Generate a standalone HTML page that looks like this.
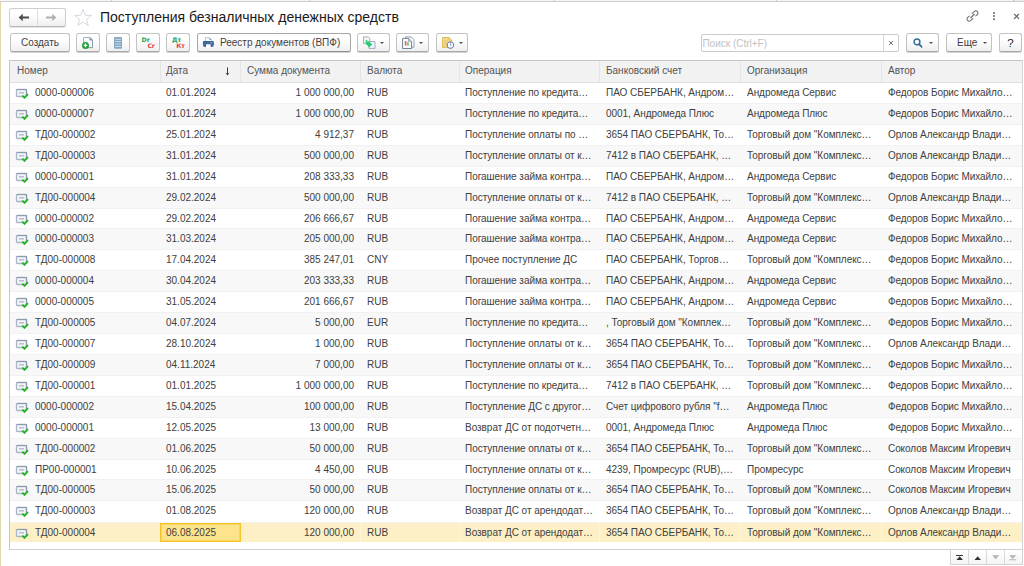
<!DOCTYPE html>
<html lang="ru">
<head>
<meta charset="utf-8">
<title>Поступления безналичных денежных средств</title>
<style>
*{box-sizing:border-box;margin:0;padding:0}
html,body{width:1024px;height:566px;overflow:hidden;background:#fff}
body{font-family:"Liberation Sans",Arial,sans-serif;font-size:10px;color:#404040;position:relative}
.abs{position:absolute}
#topline{left:0;top:0;width:1024px;height:2px;background:#f4f4f4;border-bottom:1px solid #cfcfcf}
#leftline{left:0;top:2px;width:1px;height:564px;background:#e2daae}
#corner{left:1013px;top:0;width:11px;height:2px;background:#ececec;border-left:1px solid #bdbdbd;border-bottom:1px solid #cfcfcf}
.tick{top:0;width:1px;height:2px;background:#cdcdcd}
.btn{position:absolute;height:19px;border:1px solid #c3c3c3;border-bottom-color:#a9a9a9;border-radius:2.5px;background:linear-gradient(#fff 30%,#efefef);box-shadow:0 1px 0 rgba(0,0,0,.18);color:#3f3f3f;font-size:10px;line-height:17px;text-align:center;white-space:nowrap}
.btn svg{position:absolute}
.btn.dark{border-color:#a6a6a6;border-bottom-color:#8f8f8f}
.mini{position:absolute;font-family:"DejaVu Sans","Liberation Sans",sans-serif;font-size:6.2px;font-weight:bold;line-height:7px;letter-spacing:-0.1px}
.tri{position:absolute;top:8px;width:0;height:0;border-left:2.5px solid transparent;border-right:2.5px solid transparent;border-top:2.5px solid #505050}
#title{left:100px;top:8px;font-size:14px;line-height:18px;color:#1a1a1a;white-space:nowrap}
#search{left:701px;top:34px;width:198px;height:18px;border:1px solid #cbcbcb;border-radius:2px;background:#fff}
#search .ph{position:absolute;left:0.4px;top:1px;line-height:16px;color:#c2c2c2;font-size:10px}
#search .x{position:absolute;right:0;top:0;width:15px;height:16px;border-left:1px solid #d6d6d6}
#grid{left:9px;top:60px;width:1014px;height:490px;border:1px solid #c6c6c6;border-right-color:#d6d6d6;border-bottom-color:#d0d0d0;background:#fff;overflow:hidden}
.h{position:absolute;left:0;top:0;width:1012px;height:22px;background:#f2f2f2;border-bottom:1px solid #e0e0e0}
.r{position:absolute;left:0;width:1012px;white-space:nowrap;border-bottom:1px solid #f1f1f1}
.c{position:absolute;top:0;height:20px;line-height:19px;overflow:hidden;white-space:nowrap;padding-left:6px}
.h .c{height:21px;line-height:19px;border-left:1px solid #e5e5e5;color:#525252;padding-left:5px}
.h .c0{border-left:none;padding-left:7px}
.h .c3,.h .c5,.h .c6,.h .c7{padding-left:6px}
.r.alt{background:#f8f8f8}
.r.sel{background:#fdf0c6;border-bottom:none}
.r.sel .c{height:19px}
.r.sel .c{border-left:1px solid #fdf6dd;padding-left:5px}
.r.sel .c0{border-left:none}
.c0{left:0;width:150px}
.c1{left:150px;width:80px}
.c2{left:230px;width:120px;text-align:right;padding-right:6px;padding-left:0}
.h .c2{text-align:left;padding-left:6px}
.c3{left:350px;width:99px;padding-left:7px}
.c4{left:449px;width:140px}
.c5{left:589px;width:141px;padding-left:7px}
.c6{left:730px;width:141px;padding-left:7px}
.c7{left:871px;width:141px;padding-left:7px}
.r.sel .c3,.r.sel .c5,.r.sel .c6,.r.sel .c7{padding-left:6px}
.r .c0,.r.sel .c0{padding-left:25px}
.r .c4,.r .c5,.r .c6{letter-spacing:-0.04px}
.r .c7{letter-spacing:-0.08px}
.di{position:absolute;left:5px;top:4px}
.r.sel .c1{background:#fde48c;border:1px solid #f5c32c;box-shadow:inset 0 0 0 1px rgba(246,200,60,.55);line-height:17px;height:19px;padding-left:5px;width:81px;z-index:2}
.r.sel .c2{padding-left:0}
.sort{position:absolute;left:215px;top:6px}
#pager{left:950px;top:550px;width:73px;height:15px;border:1px solid #d4d4d4;border-top:none;background:linear-gradient(#fff,#f4f4f4)}
#pager i{position:absolute;top:0;width:1px;height:14px;background:#d8d8d8}
#pager svg{position:absolute;top:4px}
</style>
</head>
<body>
<div class="abs" id="topline"></div>
<div class="abs" id="leftline"></div>
<div class="abs" id="corner"></div>
<div class="abs tick" style="left:111px"></div><div class="abs tick" style="left:309px"></div><div class="abs tick" style="left:554px"></div><div class="abs tick" style="left:776px"></div>

<!-- nav buttons -->
<div class="btn" style="left:9px;top:8px;width:57px;height:19px;border-color:#cecece;border-bottom-color:#b8b8b8;box-shadow:0 1px 0 rgba(0,0,0,.1)">
  <div class="abs" style="left:27px;top:0;width:1px;height:17px;background:#dedede"></div>
  <svg style="left:8px;top:4px" width="12" height="9" viewBox="0 0 12 9"><path d="M0.6 4.5 L4.8 0.8 V3.4 H11 V5.6 H4.8 V8.2 Z" fill="#4d4d4d"/></svg>
  <svg style="left:35px;top:4px" width="12" height="9" viewBox="0 0 12 9"><path d="M11.4 4.5 L7.2 0.8 V3.4 H1 V5.6 H7.2 V8.2 Z" fill="#b1b1b1"/></svg>
</div>
<svg class="abs" style="left:73px;top:8px" width="20" height="19" viewBox="0 0 20 19"><path d="M10 1.3 L12.2 7.2 L18.4 7.5 L13.5 11.4 L15.2 17.4 L10 14 L4.8 17.4 L6.5 11.4 L1.6 7.5 L7.8 7.2 Z" fill="#fff" stroke="#cdd4de" stroke-width="0.9" stroke-linejoin="round"/></svg>
<div class="abs" id="title">Поступления безналичных денежных средств</div>

<!-- title right icons -->
<svg class="abs" style="left:965px;top:9px" width="15" height="15" viewBox="0 0 15 15"><g transform="translate(7.5 7) rotate(-42)" fill="none" stroke="#6c6c6c" stroke-width="1.05" stroke-linecap="round"><path d="M1.3 -2.1 H4.5 A2.1 2.1 0 0 1 4.5 2.1 H2.6"/><path d="M-1.3 2.1 H-4.5 A2.1 2.1 0 0 1 -4.5 -2.1 H-2.6"/><path d="M-2.6 0 H2.6"/></g></svg>
<div class="abs" style="left:993.2px;top:11.6px;width:2.2px;height:2.2px;border-radius:1px;background:#636363;box-shadow:0 3.1px 0 #636363,0 6.2px 0 #636363"></div>
<svg class="abs" style="left:1013px;top:13px" width="7" height="7" viewBox="0 0 7 7"><path d="M1.1 0.9 L6 5.8 M6 0.9 L1.1 5.8" stroke="#606060" stroke-width="1.15" fill="none"/></svg>

<!-- toolbar -->
<div class="btn" style="left:10px;top:33px;width:60px">Создать</div>

<div class="btn" style="left:76px;top:33px;width:24px">
  <svg style="left:5px;top:3px" width="13" height="13" viewBox="0 0 13 13"><path d="M1.6 0.5 H8 L10.5 3 V10.6 H1.6 Z" fill="#fff" stroke="#a3b0c4" stroke-width="1"/><path d="M10.5 3 V10.6 H5" fill="none" stroke="#8e9cb3" stroke-width="1"/><path d="M7.8 0.6 V3.2 H10.4 Z" fill="#7f8fa8" stroke="#7f8fa8" stroke-width="0.5"/><circle cx="3.5" cy="8.4" r="3.5" fill="#219f38"/><path d="M3.5 6.6 V10.2 M1.7 8.4 H5.3" stroke="#fff" stroke-width="1.2"/></svg>
</div>
<div class="btn" style="left:106px;top:33px;width:24px">
  <svg style="left:6px;top:2px" width="11" height="14" viewBox="0 0 11 14"><rect x="1" y="1" width="8" height="11.8" rx="1.3" fill="#86a5c2"/><path d="M2 3.25 H8 M2 5.65 H8 M2 8.1 H8 M2 10.5 H8" stroke="#d3e3f0" stroke-width="0.9"/></svg>
</div>
<div class="btn" style="left:136px;top:33px;width:24px">
  <span class="mini" style="left:4.6px;top:2.2px;color:#1f9e50">Dr</span><span class="mini" style="left:10.4px;top:8.3px;color:#e04450">Cr</span>
</div>
<div class="btn" style="left:166px;top:33px;width:24px">
  <span class="mini" style="left:5px;top:2.2px;color:#1f9e50">Дт</span><span class="mini" style="left:9.2px;top:8.3px;color:#e04450">Кт</span>
</div>
<div class="btn dark" style="left:197px;top:33px;width:154px;text-align:left;padding-left:22px">
  <svg style="left:4px;top:3px" width="13" height="12" viewBox="0 0 13 12"><path d="M3.4 4.2 V0.7 H7.4 L9.6 2.9 V4.2" fill="#fff" stroke="#a9b8cc" stroke-width="0.9"/><path d="M7.3 0.8 L9.5 3 H7.3 Z" fill="#8ea0b8"/><path d="M0.9 5 Q0.9 3.9 2 3.9 H10.8 Q11.9 3.9 11.9 5 V8 Q11.9 10 9.6 10 H3.2 Q0.9 10 0.9 8 Z" fill="#3d6c9c"/><path d="M1.2 4.6 Q1.4 4 2.2 4 H10.6 Q11.4 4 11.6 4.6 Z" fill="#2f5f90"/><path d="M4.1 7.3 H8.7 V10.4 H4.1 Z" fill="#fff"/><rect x="8.4" y="5.3" width="2" height="0.8" fill="#9db9d6"/></svg>
  Реестр документов (ВПФ)</div>
<div class="btn" style="left:357px;top:33px;width:33px">
  <svg style="left:5px;top:2px" width="14" height="15" viewBox="0 0 14 15"><path d="M0.5 0.9 H5.2 L6.8 2.4 V7.6 H0.5 Z" fill="#f4f6fa" stroke="#97a4ba" stroke-width="0.9"/><path d="M5.8 5.6 H12 V12.4 H5.8 Z" fill="#f4f6fa" stroke="#97a4ba" stroke-width="0.9"/><path d="M2.5 4.2 H4.5 V6.4 L5.5 5.3 L9.3 8.5 L6 11.6 L5.2 9.8 Q2.8 9.3 2.5 4.2 Z" fill="#1fcc70"/></svg>
  <i class="tri" style="left:22px"></i>
</div>
<div class="btn" style="left:396px;top:33px;width:33px">
  <svg style="left:4px;top:2px" width="15" height="15" viewBox="0 0 15 15"><path d="M4.6 0.9 H10 L13 3.6 V11.2 H4.6 Z" fill="#fff" stroke="#8495a8" stroke-width="0.9"/><path d="M1.6 2.4 H7.6 L10.6 5.2 V12.5 H1.6 Z" fill="#fff" stroke="#6f8296" stroke-width="1"/><path d="M7.6 2.6 V5.2 H10.4" fill="#dfe5ec" stroke="#6f8296" stroke-width="0.8"/><rect x="3.9" y="5" width="1.6" height="4.3" fill="#ef6359"/><rect x="6.1" y="6" width="1.7" height="3.3" fill="#79c66e"/><rect x="3" y="9.4" width="6" height="0.6" fill="#b9c0c8"/><rect x="3" y="4.6" width="0.6" height="5" fill="#d5dade"/></svg>
  <i class="tri" style="left:22px"></i>
</div>
<div class="btn" style="left:436px;top:33px;width:32px">
  <svg style="left:4px;top:2px" width="15" height="15" viewBox="0 0 15 15"><path d="M1.5 1.5 H8 L10.7 4 V11.4 H1.5 Z" fill="#f1da8c" stroke="#dfbb52" stroke-width="1"/><path d="M8 1.6 V4 H10.6" fill="#f7e7ae" stroke="#dfbb52" stroke-width="0.8"/><path d="M3.2 5.2 H6.6 M3.2 7.2 H5.4 M3.2 9.2 H5" stroke="#dcbb5a" stroke-width="0.8"/><circle cx="9.4" cy="9.1" r="3.3" fill="#fff" stroke="#4f88cb" stroke-width="1"/><path d="M9.4 5.6 V6.6 M9.4 11.6 V12.6 M5.9 9.1 H6.9 M11.9 9.1 H12.9" stroke="#e8505a" stroke-width="0.9"/><path d="M9.5 7.4 V9.2 H10.6" stroke="#5b86c4" stroke-width="0.8" fill="none"/></svg>
  <i class="tri" style="left:21.5px"></i>
</div>

<div class="abs" id="search"><span class="ph">Поиск (Ctrl+F)</span><span class="x"><svg width="6" height="6" viewBox="0 0 6 6" style="position:absolute;left:4.3px;top:5.3px"><path d="M0.9 0.9 L5.1 5.1 M5.1 0.9 L0.9 5.1" stroke="#555" stroke-width="0.85"/></svg></span></div>
<div class="btn" style="left:906px;top:33px;width:33px">
  <svg style="left:6px;top:4px" width="11" height="11" viewBox="0 0 11 11"><circle cx="4" cy="3.9" r="2.9" fill="none" stroke="#2e6c96" stroke-width="1.45"/><path d="M6.1 6.1 L8.7 8.9" stroke="#2e6c96" stroke-width="1.6" stroke-linecap="round"/></svg>
  <i class="tri" style="left:22px"></i>
</div>
<div class="btn" style="left:946px;top:33px;width:46px;text-align:left;padding-left:10px">Еще<i class="tri" style="left:36px"></i></div>
<div class="btn" style="left:999px;top:33px;width:23px;font-size:11.5px;line-height:19px;color:#222">?</div>

<!-- grid -->
<div class="abs" id="grid">
<div class="h">
<div class="c c0">Номер</div><div class="c c1">Дата</div><div class="c c2">Сумма документа</div><div class="c c3">Валюта</div><div class="c c4">Операция</div><div class="c c5">Банковский счет</div><div class="c c6">Организация</div><div class="c c7">Автор</div>
</div>
<svg class="sort" width="5" height="9" viewBox="0 0 5 9"><path d="M2.5 0.4 V7.6" fill="none" stroke="#3c3c3c" stroke-width="1"/><path d="M0.5 5.8 L2.5 8.4 L4.5 5.8 L2.5 6.6 Z" fill="#3c3c3c"/></svg>
<div id="rows" class="abs" style="left:0;top:22px;width:1011px">
<div class="r" style="top:0px;height:21px"><div class="c c0"><svg class="di" width="14" height="12" viewBox="0 0 14 12"><rect x="1.5" y="2.5" width="10" height="7" rx="0.8" fill="#f3f5f8" stroke="#aab5c6" stroke-width="1.3"/><path d="M1.8 2.5 H11.5 V9" fill="none" stroke="#8d9bb1" stroke-width="1.2"/><rect x="4" y="5" width="5" height="1.6" fill="#bcc2cc"/><path d="M7.2 8.6 L9.5 10.8 L13 7.2" fill="none" stroke="#25b325" stroke-width="1.9"/></svg><span>0000-000006</span></div><div class="c c1"><span>01.01.2024</span></div><div class="c c2"><span>1 000 000,00</span></div><div class="c c3"><span>RUB</span></div><div class="c c4"><span>Поступление по кредита…</span></div><div class="c c5"><span>ПАО СБЕРБАНК, Андром…</span></div><div class="c c6"><span>Андромеда Сервис</span></div><div class="c c7"><span>Федоров Борис Михайло…</span></div></div>
<div class="r alt" style="top:21px;height:21px"><div class="c c0"><svg class="di" width="14" height="12" viewBox="0 0 14 12"><rect x="1.5" y="2.5" width="10" height="7" rx="0.8" fill="#f3f5f8" stroke="#aab5c6" stroke-width="1.3"/><path d="M1.8 2.5 H11.5 V9" fill="none" stroke="#8d9bb1" stroke-width="1.2"/><rect x="4" y="5" width="5" height="1.6" fill="#bcc2cc"/><path d="M7.2 8.6 L9.5 10.8 L13 7.2" fill="none" stroke="#25b325" stroke-width="1.9"/></svg><span>0000-000007</span></div><div class="c c1"><span>01.01.2024</span></div><div class="c c2"><span>1 000 000,00</span></div><div class="c c3"><span>RUB</span></div><div class="c c4"><span>Поступление по кредита…</span></div><div class="c c5"><span>0001, Андромеда Плюс</span></div><div class="c c6"><span>Андромеда Плюс</span></div><div class="c c7"><span>Федоров Борис Михайло…</span></div></div>
<div class="r" style="top:42px;height:21px"><div class="c c0"><svg class="di" width="14" height="12" viewBox="0 0 14 12"><rect x="1.5" y="2.5" width="10" height="7" rx="0.8" fill="#f3f5f8" stroke="#aab5c6" stroke-width="1.3"/><path d="M1.8 2.5 H11.5 V9" fill="none" stroke="#8d9bb1" stroke-width="1.2"/><rect x="4" y="5" width="5" height="1.6" fill="#bcc2cc"/><path d="M7.2 8.6 L9.5 10.8 L13 7.2" fill="none" stroke="#25b325" stroke-width="1.9"/></svg><span>ТД00-000002</span></div><div class="c c1"><span>25.01.2024</span></div><div class="c c2"><span>4 912,37</span></div><div class="c c3"><span>RUB</span></div><div class="c c4"><span>Поступление оплаты по …</span></div><div class="c c5"><span>3654 ПАО СБЕРБАНК, То…</span></div><div class="c c6"><span>Торговый дом &quot;Комплекс…</span></div><div class="c c7"><span>Орлов Александр Влади…</span></div></div>
<div class="r alt" style="top:63px;height:21px"><div class="c c0"><svg class="di" width="14" height="12" viewBox="0 0 14 12"><rect x="1.5" y="2.5" width="10" height="7" rx="0.8" fill="#f3f5f8" stroke="#aab5c6" stroke-width="1.3"/><path d="M1.8 2.5 H11.5 V9" fill="none" stroke="#8d9bb1" stroke-width="1.2"/><rect x="4" y="5" width="5" height="1.6" fill="#bcc2cc"/><path d="M7.2 8.6 L9.5 10.8 L13 7.2" fill="none" stroke="#25b325" stroke-width="1.9"/></svg><span>ТД00-000003</span></div><div class="c c1"><span>31.01.2024</span></div><div class="c c2"><span>500 000,00</span></div><div class="c c3"><span>RUB</span></div><div class="c c4"><span>Поступление оплаты от к…</span></div><div class="c c5"><span>7412 в ПАО СБЕРБАНК, …</span></div><div class="c c6"><span>Торговый дом &quot;Комплекс…</span></div><div class="c c7"><span>Орлов Александр Влади…</span></div></div>
<div class="r" style="top:84px;height:21px"><div class="c c0"><svg class="di" width="14" height="12" viewBox="0 0 14 12"><rect x="1.5" y="2.5" width="10" height="7" rx="0.8" fill="#f3f5f8" stroke="#aab5c6" stroke-width="1.3"/><path d="M1.8 2.5 H11.5 V9" fill="none" stroke="#8d9bb1" stroke-width="1.2"/><rect x="4" y="5" width="5" height="1.6" fill="#bcc2cc"/><path d="M7.2 8.6 L9.5 10.8 L13 7.2" fill="none" stroke="#25b325" stroke-width="1.9"/></svg><span>0000-000001</span></div><div class="c c1"><span>31.01.2024</span></div><div class="c c2"><span>208 333,33</span></div><div class="c c3"><span>RUB</span></div><div class="c c4"><span>Погашение займа контра…</span></div><div class="c c5"><span>ПАО СБЕРБАНК, Андром…</span></div><div class="c c6"><span>Андромеда Сервис</span></div><div class="c c7"><span>Федоров Борис Михайло…</span></div></div>
<div class="r alt" style="top:105px;height:21px"><div class="c c0"><svg class="di" width="14" height="12" viewBox="0 0 14 12"><rect x="1.5" y="2.5" width="10" height="7" rx="0.8" fill="#f3f5f8" stroke="#aab5c6" stroke-width="1.3"/><path d="M1.8 2.5 H11.5 V9" fill="none" stroke="#8d9bb1" stroke-width="1.2"/><rect x="4" y="5" width="5" height="1.6" fill="#bcc2cc"/><path d="M7.2 8.6 L9.5 10.8 L13 7.2" fill="none" stroke="#25b325" stroke-width="1.9"/></svg><span>ТД00-000004</span></div><div class="c c1"><span>29.02.2024</span></div><div class="c c2"><span>500 000,00</span></div><div class="c c3"><span>RUB</span></div><div class="c c4"><span>Поступление оплаты от к…</span></div><div class="c c5"><span>7412 в ПАО СБЕРБАНК, …</span></div><div class="c c6"><span>Торговый дом &quot;Комплекс…</span></div><div class="c c7"><span>Орлов Александр Влади…</span></div></div>
<div class="r" style="top:126px;height:20px"><div class="c c0"><svg class="di" width="14" height="12" viewBox="0 0 14 12"><rect x="1.5" y="2.5" width="10" height="7" rx="0.8" fill="#f3f5f8" stroke="#aab5c6" stroke-width="1.3"/><path d="M1.8 2.5 H11.5 V9" fill="none" stroke="#8d9bb1" stroke-width="1.2"/><rect x="4" y="5" width="5" height="1.6" fill="#bcc2cc"/><path d="M7.2 8.6 L9.5 10.8 L13 7.2" fill="none" stroke="#25b325" stroke-width="1.9"/></svg><span>0000-000002</span></div><div class="c c1"><span>29.02.2024</span></div><div class="c c2"><span>206 666,67</span></div><div class="c c3"><span>RUB</span></div><div class="c c4"><span>Погашение займа контра…</span></div><div class="c c5"><span>ПАО СБЕРБАНК, Андром…</span></div><div class="c c6"><span>Андромеда Сервис</span></div><div class="c c7"><span>Федоров Борис Михайло…</span></div></div>
<div class="r alt" style="top:146px;height:21px"><div class="c c0"><svg class="di" width="14" height="12" viewBox="0 0 14 12"><rect x="1.5" y="2.5" width="10" height="7" rx="0.8" fill="#f3f5f8" stroke="#aab5c6" stroke-width="1.3"/><path d="M1.8 2.5 H11.5 V9" fill="none" stroke="#8d9bb1" stroke-width="1.2"/><rect x="4" y="5" width="5" height="1.6" fill="#bcc2cc"/><path d="M7.2 8.6 L9.5 10.8 L13 7.2" fill="none" stroke="#25b325" stroke-width="1.9"/></svg><span>0000-000003</span></div><div class="c c1"><span>31.03.2024</span></div><div class="c c2"><span>205 000,00</span></div><div class="c c3"><span>RUB</span></div><div class="c c4"><span>Погашение займа контра…</span></div><div class="c c5"><span>ПАО СБЕРБАНК, Андром…</span></div><div class="c c6"><span>Андромеда Сервис</span></div><div class="c c7"><span>Федоров Борис Михайло…</span></div></div>
<div class="r" style="top:167px;height:21px"><div class="c c0"><svg class="di" width="14" height="12" viewBox="0 0 14 12"><rect x="1.5" y="2.5" width="10" height="7" rx="0.8" fill="#f3f5f8" stroke="#aab5c6" stroke-width="1.3"/><path d="M1.8 2.5 H11.5 V9" fill="none" stroke="#8d9bb1" stroke-width="1.2"/><rect x="4" y="5" width="5" height="1.6" fill="#bcc2cc"/><path d="M7.2 8.6 L9.5 10.8 L13 7.2" fill="none" stroke="#25b325" stroke-width="1.9"/></svg><span>ТД00-000008</span></div><div class="c c1"><span>17.04.2024</span></div><div class="c c2"><span>385 247,01</span></div><div class="c c3"><span>CNY</span></div><div class="c c4"><span>Прочее поступление ДС</span></div><div class="c c5"><span>ПАО СБЕРБАНК, Торгов…</span></div><div class="c c6"><span>Торговый дом &quot;Комплекс…</span></div><div class="c c7"><span>Федоров Борис Михайло…</span></div></div>
<div class="r alt" style="top:188px;height:21px"><div class="c c0"><svg class="di" width="14" height="12" viewBox="0 0 14 12"><rect x="1.5" y="2.5" width="10" height="7" rx="0.8" fill="#f3f5f8" stroke="#aab5c6" stroke-width="1.3"/><path d="M1.8 2.5 H11.5 V9" fill="none" stroke="#8d9bb1" stroke-width="1.2"/><rect x="4" y="5" width="5" height="1.6" fill="#bcc2cc"/><path d="M7.2 8.6 L9.5 10.8 L13 7.2" fill="none" stroke="#25b325" stroke-width="1.9"/></svg><span>0000-000004</span></div><div class="c c1"><span>30.04.2024</span></div><div class="c c2"><span>203 333,33</span></div><div class="c c3"><span>RUB</span></div><div class="c c4"><span>Погашение займа контра…</span></div><div class="c c5"><span>ПАО СБЕРБАНК, Андром…</span></div><div class="c c6"><span>Андромеда Сервис</span></div><div class="c c7"><span>Федоров Борис Михайло…</span></div></div>
<div class="r" style="top:209px;height:21px"><div class="c c0"><svg class="di" width="14" height="12" viewBox="0 0 14 12"><rect x="1.5" y="2.5" width="10" height="7" rx="0.8" fill="#f3f5f8" stroke="#aab5c6" stroke-width="1.3"/><path d="M1.8 2.5 H11.5 V9" fill="none" stroke="#8d9bb1" stroke-width="1.2"/><rect x="4" y="5" width="5" height="1.6" fill="#bcc2cc"/><path d="M7.2 8.6 L9.5 10.8 L13 7.2" fill="none" stroke="#25b325" stroke-width="1.9"/></svg><span>0000-000005</span></div><div class="c c1"><span>31.05.2024</span></div><div class="c c2"><span>201 666,67</span></div><div class="c c3"><span>RUB</span></div><div class="c c4"><span>Погашение займа контра…</span></div><div class="c c5"><span>ПАО СБЕРБАНК, Андром…</span></div><div class="c c6"><span>Андромеда Сервис</span></div><div class="c c7"><span>Федоров Борис Михайло…</span></div></div>
<div class="r alt" style="top:230px;height:21px"><div class="c c0"><svg class="di" width="14" height="12" viewBox="0 0 14 12"><rect x="1.5" y="2.5" width="10" height="7" rx="0.8" fill="#f3f5f8" stroke="#aab5c6" stroke-width="1.3"/><path d="M1.8 2.5 H11.5 V9" fill="none" stroke="#8d9bb1" stroke-width="1.2"/><rect x="4" y="5" width="5" height="1.6" fill="#bcc2cc"/><path d="M7.2 8.6 L9.5 10.8 L13 7.2" fill="none" stroke="#25b325" stroke-width="1.9"/></svg><span>ТД00-000005</span></div><div class="c c1"><span>04.07.2024</span></div><div class="c c2"><span>5 000,00</span></div><div class="c c3"><span>EUR</span></div><div class="c c4"><span>Поступление по кредита…</span></div><div class="c c5"><span>, Торговый дом &quot;Комплек…</span></div><div class="c c6"><span>Торговый дом &quot;Комплекс…</span></div><div class="c c7"><span>Федоров Борис Михайло…</span></div></div>
<div class="r" style="top:251px;height:21px"><div class="c c0"><svg class="di" width="14" height="12" viewBox="0 0 14 12"><rect x="1.5" y="2.5" width="10" height="7" rx="0.8" fill="#f3f5f8" stroke="#aab5c6" stroke-width="1.3"/><path d="M1.8 2.5 H11.5 V9" fill="none" stroke="#8d9bb1" stroke-width="1.2"/><rect x="4" y="5" width="5" height="1.6" fill="#bcc2cc"/><path d="M7.2 8.6 L9.5 10.8 L13 7.2" fill="none" stroke="#25b325" stroke-width="1.9"/></svg><span>ТД00-000007</span></div><div class="c c1"><span>28.10.2024</span></div><div class="c c2"><span>1 000,00</span></div><div class="c c3"><span>RUB</span></div><div class="c c4"><span>Поступление оплаты от к…</span></div><div class="c c5"><span>3654 ПАО СБЕРБАНК, То…</span></div><div class="c c6"><span>Торговый дом &quot;Комплекс…</span></div><div class="c c7"><span>Орлов Александр Влади…</span></div></div>
<div class="r alt" style="top:272px;height:21px"><div class="c c0"><svg class="di" width="14" height="12" viewBox="0 0 14 12"><rect x="1.5" y="2.5" width="10" height="7" rx="0.8" fill="#f3f5f8" stroke="#aab5c6" stroke-width="1.3"/><path d="M1.8 2.5 H11.5 V9" fill="none" stroke="#8d9bb1" stroke-width="1.2"/><rect x="4" y="5" width="5" height="1.6" fill="#bcc2cc"/><path d="M7.2 8.6 L9.5 10.8 L13 7.2" fill="none" stroke="#25b325" stroke-width="1.9"/></svg><span>ТД00-000009</span></div><div class="c c1"><span>04.11.2024</span></div><div class="c c2"><span>7 000,00</span></div><div class="c c3"><span>RUB</span></div><div class="c c4"><span>Поступление оплаты от к…</span></div><div class="c c5"><span>3654 ПАО СБЕРБАНК, То…</span></div><div class="c c6"><span>Торговый дом &quot;Комплекс…</span></div><div class="c c7"><span>Федоров Борис Михайло…</span></div></div>
<div class="r" style="top:293px;height:21px"><div class="c c0"><svg class="di" width="14" height="12" viewBox="0 0 14 12"><rect x="1.5" y="2.5" width="10" height="7" rx="0.8" fill="#f3f5f8" stroke="#aab5c6" stroke-width="1.3"/><path d="M1.8 2.5 H11.5 V9" fill="none" stroke="#8d9bb1" stroke-width="1.2"/><rect x="4" y="5" width="5" height="1.6" fill="#bcc2cc"/><path d="M7.2 8.6 L9.5 10.8 L13 7.2" fill="none" stroke="#25b325" stroke-width="1.9"/></svg><span>ТД00-000001</span></div><div class="c c1"><span>01.01.2025</span></div><div class="c c2"><span>1 000 000,00</span></div><div class="c c3"><span>RUB</span></div><div class="c c4"><span>Поступление по кредита…</span></div><div class="c c5"><span>7412 в ПАО СБЕРБАНК, …</span></div><div class="c c6"><span>Торговый дом &quot;Комплекс…</span></div><div class="c c7"><span>Федоров Борис Михайло…</span></div></div>
<div class="r alt" style="top:314px;height:21px"><div class="c c0"><svg class="di" width="14" height="12" viewBox="0 0 14 12"><rect x="1.5" y="2.5" width="10" height="7" rx="0.8" fill="#f3f5f8" stroke="#aab5c6" stroke-width="1.3"/><path d="M1.8 2.5 H11.5 V9" fill="none" stroke="#8d9bb1" stroke-width="1.2"/><rect x="4" y="5" width="5" height="1.6" fill="#bcc2cc"/><path d="M7.2 8.6 L9.5 10.8 L13 7.2" fill="none" stroke="#25b325" stroke-width="1.9"/></svg><span>0000-000002</span></div><div class="c c1"><span>15.04.2025</span></div><div class="c c2"><span>100 000,00</span></div><div class="c c3"><span>RUB</span></div><div class="c c4"><span>Поступление ДС с другог…</span></div><div class="c c5"><span>Счет цифрового рубля &quot;f…</span></div><div class="c c6"><span>Андромеда Плюс</span></div><div class="c c7"><span>Федоров Борис Михайло…</span></div></div>
<div class="r" style="top:335px;height:21px"><div class="c c0"><svg class="di" width="14" height="12" viewBox="0 0 14 12"><rect x="1.5" y="2.5" width="10" height="7" rx="0.8" fill="#f3f5f8" stroke="#aab5c6" stroke-width="1.3"/><path d="M1.8 2.5 H11.5 V9" fill="none" stroke="#8d9bb1" stroke-width="1.2"/><rect x="4" y="5" width="5" height="1.6" fill="#bcc2cc"/><path d="M7.2 8.6 L9.5 10.8 L13 7.2" fill="none" stroke="#25b325" stroke-width="1.9"/></svg><span>0000-000001</span></div><div class="c c1"><span>12.05.2025</span></div><div class="c c2"><span>13 000,00</span></div><div class="c c3"><span>RUB</span></div><div class="c c4"><span>Возврат ДС от подотчетн…</span></div><div class="c c5"><span>0001, Андромеда Плюс</span></div><div class="c c6"><span>Андромеда Плюс</span></div><div class="c c7"><span>Федоров Борис Михайло…</span></div></div>
<div class="r alt" style="top:356px;height:21px"><div class="c c0"><svg class="di" width="14" height="12" viewBox="0 0 14 12"><rect x="1.5" y="2.5" width="10" height="7" rx="0.8" fill="#f3f5f8" stroke="#aab5c6" stroke-width="1.3"/><path d="M1.8 2.5 H11.5 V9" fill="none" stroke="#8d9bb1" stroke-width="1.2"/><rect x="4" y="5" width="5" height="1.6" fill="#bcc2cc"/><path d="M7.2 8.6 L9.5 10.8 L13 7.2" fill="none" stroke="#25b325" stroke-width="1.9"/></svg><span>ТД00-000002</span></div><div class="c c1"><span>01.06.2025</span></div><div class="c c2"><span>50 000,00</span></div><div class="c c3"><span>RUB</span></div><div class="c c4"><span>Поступление оплаты от к…</span></div><div class="c c5"><span>3654 ПАО СБЕРБАНК, То…</span></div><div class="c c6"><span>Торговый дом &quot;Комплекс…</span></div><div class="c c7"><span>Соколов Максим Игоревич</span></div></div>
<div class="r" style="top:377px;height:20px"><div class="c c0"><svg class="di" width="14" height="12" viewBox="0 0 14 12"><rect x="1.5" y="2.5" width="10" height="7" rx="0.8" fill="#f3f5f8" stroke="#aab5c6" stroke-width="1.3"/><path d="M1.8 2.5 H11.5 V9" fill="none" stroke="#8d9bb1" stroke-width="1.2"/><rect x="4" y="5" width="5" height="1.6" fill="#bcc2cc"/><path d="M7.2 8.6 L9.5 10.8 L13 7.2" fill="none" stroke="#25b325" stroke-width="1.9"/></svg><span>ПР00-000001</span></div><div class="c c1"><span>10.06.2025</span></div><div class="c c2"><span>4 450,00</span></div><div class="c c3"><span>RUB</span></div><div class="c c4"><span>Поступление оплаты от к…</span></div><div class="c c5"><span>4239, Промресурс (RUB),…</span></div><div class="c c6"><span>Промресурс</span></div><div class="c c7"><span>Соколов Максим Игоревич</span></div></div>
<div class="r alt" style="top:397px;height:21px"><div class="c c0"><svg class="di" width="14" height="12" viewBox="0 0 14 12"><rect x="1.5" y="2.5" width="10" height="7" rx="0.8" fill="#f3f5f8" stroke="#aab5c6" stroke-width="1.3"/><path d="M1.8 2.5 H11.5 V9" fill="none" stroke="#8d9bb1" stroke-width="1.2"/><rect x="4" y="5" width="5" height="1.6" fill="#bcc2cc"/><path d="M7.2 8.6 L9.5 10.8 L13 7.2" fill="none" stroke="#25b325" stroke-width="1.9"/></svg><span>ТД00-000005</span></div><div class="c c1"><span>15.06.2025</span></div><div class="c c2"><span>50 000,00</span></div><div class="c c3"><span>RUB</span></div><div class="c c4"><span>Поступление оплаты от к…</span></div><div class="c c5"><span>3654 ПАО СБЕРБАНК, То…</span></div><div class="c c6"><span>Торговый дом &quot;Комплекс…</span></div><div class="c c7"><span>Соколов Максим Игоревич</span></div></div>
<div class="r" style="top:418px;height:22px"><div class="c c0"><svg class="di" width="14" height="12" viewBox="0 0 14 12"><rect x="1.5" y="2.5" width="10" height="7" rx="0.8" fill="#f3f5f8" stroke="#aab5c6" stroke-width="1.3"/><path d="M1.8 2.5 H11.5 V9" fill="none" stroke="#8d9bb1" stroke-width="1.2"/><rect x="4" y="5" width="5" height="1.6" fill="#bcc2cc"/><path d="M7.2 8.6 L9.5 10.8 L13 7.2" fill="none" stroke="#25b325" stroke-width="1.9"/></svg><span>ТД00-000003</span></div><div class="c c1"><span>01.08.2025</span></div><div class="c c2"><span>120 000,00</span></div><div class="c c3"><span>RUB</span></div><div class="c c4"><span>Возврат ДС от арендодат…</span></div><div class="c c5"><span>3654 ПАО СБЕРБАНК, То…</span></div><div class="c c6"><span>Торговый дом &quot;Комплекс…</span></div><div class="c c7"><span>Орлов Александр Влади…</span></div></div>
<div class="r alt sel" style="top:440px;height:19px"><div class="c c0"><svg class="di" width="14" height="12" viewBox="0 0 14 12"><rect x="1.5" y="2.5" width="10" height="7" rx="0.8" fill="#f3f5f8" stroke="#aab5c6" stroke-width="1.3"/><path d="M1.8 2.5 H11.5 V9" fill="none" stroke="#8d9bb1" stroke-width="1.2"/><rect x="4" y="5" width="5" height="1.6" fill="#bcc2cc"/><path d="M7.2 8.6 L9.5 10.8 L13 7.2" fill="none" stroke="#25b325" stroke-width="1.9"/></svg><span>ТД00-000004</span></div><div class="c c1"><span>06.08.2025</span></div><div class="c c2"><span>120 000,00</span></div><div class="c c3"><span>RUB</span></div><div class="c c4"><span>Возврат ДС от арендодат…</span></div><div class="c c5"><span>3654 ПАО СБЕРБАНК, То…</span></div><div class="c c6"><span>Торговый дом &quot;Комплекс…</span></div><div class="c c7"><span>Орлов Александр Влади…</span></div></div>
</div>
</div>

<div class="abs" id="pager"><i style="left:17px"></i><i style="left:35px"></i><i style="left:53px"></i>
<svg style="left:4.8px;top:4.6px" width="7.4" height="5.4" viewBox="0 0 8 6"><path d="M0 0 H8 V1.1 H0 Z M4 1.5 L8 6 H0 Z" fill="#333"/></svg>
<svg style="left:22.8px;top:4.6px" width="7.4" height="5.4" viewBox="0 0 8 6"><path d="M4 1.5 L8 6 H0 Z" fill="#333"/></svg>
<svg style="left:40.6px;top:5.2px" width="7.4" height="5.4" viewBox="0 0 8 6"><path d="M0 0.2 H8 L4 4.7 Z" fill="#b4b4b4"/></svg>
<svg style="left:58.4px;top:5.2px" width="7.4" height="5.4" viewBox="0 0 8 6"><path d="M0 0.2 H8 L4 4.5 Z M0 4.8 H8 V5.8 H0 Z" fill="#b4b4b4"/></svg>
</div>
</body>
</html>
